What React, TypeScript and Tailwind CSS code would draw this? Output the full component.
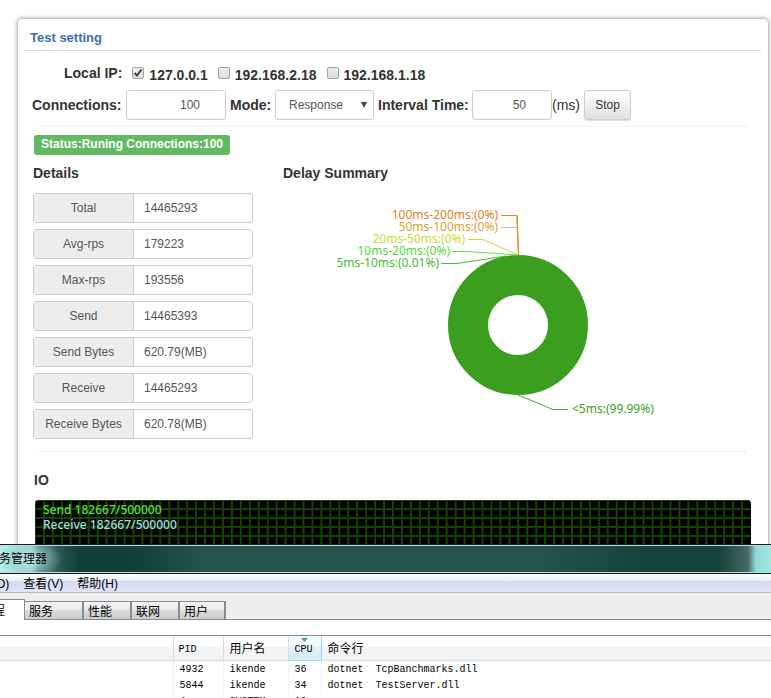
import React from "react";

const details = [
  ["Total", "14465293"],
  ["Avg-rps", "179223"],
  ["Max-rps", "193556"],
  ["Send", "14465393"],
  ["Send Bytes", "620.79(MB)"],
  ["Receive", "14465293"],
  ["Receive Bytes", "620.78(MB)"],
];

const addresses = ["127.0.0.1", "192.168.2.18", "192.168.1.18"];

const processes = [
  ["4932", "ikende", "36", "dotnet  TcpBanchmarks.dll"],
  ["5844", "ikende", "34", "dotnet  TestServer.dll"],
  ["4", "SYSTEM", "10", ""],
];

const tabs = [
  ["服务", "w-[59px]"],
  ["性能", "w-[48px]"],
  ["联网", "w-[48px]"],
  ["用户", "w-[46px]"],
];

const columns = Array.from({ length: 80 }, (_, i) => i * 8.95);
const rows = Array.from({ length: 12 }, (_, i) => i * 9);

function DelayChart() {
  return (
    <svg
      viewBox="0 0 470 240"
      className="block h-[240px] w-[470px] font-['Noto_Sans',sans-serif] text-[12px]"
      fill="none"
      role="img"
      aria-label="Delay Summary"
    >
      <circle cx="235" cy="135" r="50" stroke="#3b9e1f" strokeWidth="40" />
      <g strokeWidth="1">
        <path d="M218 25.500h16l1.500 40" stroke="#dc8a2c" />
        <path d="M218 37.500h16" stroke="#e8b36c" />
        <path d="M234 26l1.500 39" stroke="#dc7f20" />
        <path d="M185 49.500h15L235 65" stroke="#c3dc34" />
        <path d="M169 61.500h15L235 65" stroke="#5fdb48" />
        <path d="M158 73.500h16L223 66" stroke="#4fb83a" />
        <path d="M235 205l35 14.500h15" stroke="#48a52d" />
      </g>
      <g textAnchor="end">
        <text x="215" y="29" fill="#dd8023">100ms-200ms:(0%)</text>
        <text x="215" y="41" fill="#dba02b">50ms-100ms:(0%)</text>
        <text x="182" y="53" fill="#c5da35">20ms-50ms:(0%)</text>
        <text x="167" y="65" fill="#52d83a">10ms-20ms:(0%)</text>
        <text x="156" y="77" fill="#46b832">5ms-10ms:(0.01%)</text>
      </g>
      <text x="289" y="223" fill="#3b9e1f">&lt;5ms:(99.99%)</text>
    </svg>
  );
}

function IoGraph() {
  return (
    <div className="mx-[17px] grid h-[100px] overflow-hidden rounded bg-black">
      <svg viewBox="0 0 716 100" preserveAspectRatio="none" className="col-start-1 row-start-1 h-full w-full" stroke="#164206" strokeWidth="2">
        {columns.map((x) => (
          <line key={x} x1={x} x2={x} y1="0" y2="100" />
        ))}
        {rows.map((y) => (
          <line key={y} x1="0" x2="716" y1={y} y2={y} />
        ))}
      </svg>
      <div className="z-10 col-start-1 row-start-1 px-[8px] pt-[2px] font-['Noto_Sans',sans-serif] text-[12px] leading-[15px] font-medium">
        <p className="text-[#59e23d]">Send 182667/500000</p>
        <p className="text-[#a3dde4]">Receive 182667/500000</p>
      </div>
    </div>
  );
}

function TaskManager() {
  return (
    <section className="absolute inset-x-0 top-[544px] bottom-0 overflow-hidden bg-[#eee] font-['Liberation_Sans','Noto_Sans_CJK_SC',sans-serif] text-[12px] text-black">
      <header className="h-[30px] border-y border-[#14211f] bg-[radial-gradient(ellipse_32px_22px_at_30px_14px,#c3eeee_0,#9fcfcf99_50%,transparent),linear-gradient(90deg,#b6eeee_0,#93d8d6_32px,#3c716a_38px,#2c5c54_56px,#113f35_80px,#113f35_130px,#23534a_200px,#23534a_540px,#174238_650px,#174238_720px,#4b6b62_748px,#8cdcda_756px,#a4e5e3_771px)]">
        <h2 className="h-[28px] border-y border-[#b9dedb] text-[12px] leading-[26px]"><span className="-ml-px">务管理器</span></h2>
      </header>
      <nav className="flex h-[19px] items-center gap-[14px] border-b border-[#b4b9cf] bg-[linear-gradient(#fff,#e8ecf6_7px,#d4dbed_7px,#e1e5f5)] pt-[2px]">
        <button className="-ml-1">O)</button>
        <button>查看(V)</button>
        <button>帮助(H)</button>
      </nav>
      <div role="tablist" className="flex h-[27px] items-end border-b border-[#888a94] font-['Noto_Sans_CJK_SC',sans-serif]">
        <button role="tab" aria-selected="true" className="-mb-px h-[21px] w-[25px] border-t border-r border-[#888a94] bg-white text-left leading-[18px]"><span className="-ml-[7px]">程</span></button>
        {tabs.map(([name, width]) => (
          <button key={name} role="tab" aria-selected="false" className={width + " h-[18px] border-t border-r-2 border-[#888a94] bg-[linear-gradient(#f2f2f2,#ebebeb_50%,#dadada_50%,#cdcdcd)] pl-1 text-left leading-[17px]"}>{name}</button>
        ))}
      </div>
      <div className="h-[16px] border-b border-[#888a94] bg-white" />
      <table className="w-full table-fixed border-collapse bg-white font-['Liberation_Mono','Noto_Sans_CJK_SC',monospace] text-[10px]">
        <thead>
          <tr className="h-[24px] bg-[linear-gradient(#fff_40%,#f5f6f8_40%,#f1f2f4)] text-left leading-[16px]">
            <th className="w-[173px] border-r border-b border-[#d9dbdf]" />
            <th className="w-[50px] border-r border-b border-[#d9dbdf] pt-[4px] pl-[5px] font-normal">PID</th>
            <th className="w-[65px] border-r border-b border-[#d9dbdf] pt-[4px] pl-[6px] text-[12px] font-normal">用户名</th>
            <th className="w-[33px] border-x border-b border-[#96d9f9] bg-[linear-gradient(#f2f9fc_40%,#e1f1f9_40%,#d8ecf6)] pl-[6px] font-normal">
              <svg viewBox="0 0 7 4" className="ml-[6px] block h-[4px] w-[7px]" fill="#4a9cc0"><path d="M0 0h7L3.500 4z" /></svg>
              CPU
            </th>
            <th className="border-b border-[#d9dbdf] pt-[4px] pl-[6px] text-[12px] font-normal">命令行</th>
          </tr>
        </thead>
        <tbody>
          {processes.map(([pid, user, cpu, command]) => (
            <tr key={pid} className="h-[16px] leading-[14px]">
              <td className="border-r border-[#edf5fb]" />
              <td className="border-r border-[#edf5fb] pt-[2px] pl-[6px]">{pid}</td>
              <td className="border-r border-[#edf5fb] pt-[2px] pl-[6px]">{user}</td>
              <td className="border-r border-[#edf5fb] pt-[2px] pl-[6px]">{cpu}</td>
              <td className="pt-[2px] pl-[6px] whitespace-pre">{command}</td>
            </tr>
          ))}
        </tbody>
      </table>
    </section>
  );
}

export default function App() {
  return (
    <div className="relative h-screen overflow-hidden bg-white pt-[18px] pr-[2px] pl-[17px] font-['Liberation_Sans',Arial,sans-serif] text-[#333]">
      <main className="rounded-[5px] border border-[#c4c4c4] pb-[20px] shadow-[0_0_4px_#aaa]">
        <h1 className="mx-[7px] h-[32px] border-b border-[#d9d9d9] pl-[5px] text-[13px] leading-[37px] font-bold text-[#3d70b2]">Test setting</h1>
        <form className="text-[14px]" onSubmit={(e) => e.preventDefault()}>
          <fieldset className="flex h-[39px] items-center pt-[10px] pl-[46px] font-bold">
            <span className="mr-[10px] -mt-1">Local IP:</span>
            {addresses.map((ip, i) => (
              <label key={ip} className="mr-[10px] flex items-center gap-[5px]">
                <span className="-mt-1.5 grid size-[12px]">
                  <input
                    type="checkbox"
                    defaultChecked={i === 0}
                    className="peer col-start-1 row-start-1 size-[12px] appearance-none rounded-[2px] border border-[#a0a0a0] bg-linear-to-b from-[#eee] to-[#dcdcdc]"
                  />
                  <svg viewBox="0 0 12 12" className="pointer-events-none invisible z-10 col-start-1 row-start-1 size-[12px] peer-checked:visible" fill="none" stroke="#2f4444" strokeWidth="2">
                    <path d="M2.500 6l2.500 2.500L9.500 2.500" />
                  </svg>
                </span>
                <span>{ip}</span>
              </label>
            ))}
          </fieldset>
          <div className="flex h-[30px] items-center pl-[14px]">
            <label htmlFor="connections" className="w-[94px] font-bold">Connections:</label>
            <input id="connections" defaultValue="100" className="h-[30px] w-[100px] rounded-[3px] border border-[#ccc] pr-[25px] text-right text-[12px] text-[#555]" />
            <label htmlFor="mode" className="ml-[4px] w-[45px] font-bold">Mode:</label>
            <span className="grid h-[30px] w-[99px] items-center">
              <select id="mode" className="col-start-1 row-start-1 h-[30px] appearance-none rounded-[3px] border border-[#ccc] pl-[13px] text-[12px] text-[#555]">
                <option>Response</option>
              </select>
              <svg viewBox="0 0 6 6" className="pointer-events-none col-start-1 row-start-1 mr-[7px] size-[6px] justify-self-end" fill="#444">
                <path d="M0 0h6L3 6z" />
              </svg>
            </span>
            <label htmlFor="interval" className="ml-[4px] w-[94px] font-bold">Interval Time:</label>
            <input id="interval" defaultValue="50" className="h-[30px] w-[80px] rounded-[3px] border border-[#ccc] pr-[25px] text-right text-[12px] text-[#555]" />
            <span className="w-[32px]">(ms)</span>
            <button className="h-[30px] w-[47px] rounded-[3px] border border-[#ccc] bg-linear-to-b from-white to-[#e0e0e0] text-[12px] shadow-[0_1px_1px_#ddd]">Stop</button>
          </div>
        </form>
        <hr className="mx-[21px] mt-[6px] border-[#eee]" />
        <p className="mt-[8px] ml-[16px] h-[20px] w-[196px] rounded-[3px] bg-[#62b962] pl-[7px] text-[12px] leading-[18px] font-bold text-white">Status:Runing Connections:100</p>
        <div className="flex pl-[15px]">
          <section className="w-[250px]">
            <h2 className="pt-[8px] pb-[10px] text-[14px] leading-[20px] font-bold">Details</h2>
            <dl className="flex w-[220px] flex-col gap-[6px] text-[12px] text-[#555]">
              {details.map(([name, value]) => (
                <div key={name} className="flex h-[30px] rounded-[3px] border border-[#ccc] leading-[28px]">
                  <dt className="w-[100px] border-r border-[#ccc] bg-[#ededed] text-center">{name}</dt>
                  <dd className="pl-[10px]">{value}</dd>
                </div>
              ))}
            </dl>
          </section>
          <section>
            <h2 className="pt-[8px] text-[14px] leading-[20px] font-bold">Delay Summary</h2>
            <div className="pt-[7px]"><DelayChart /></div>
          </section>
        </div>
        <hr className="mx-[21px] mt-[12px] border-[#eee]" />
        <h2 className="mt-[18px] mb-[10px] ml-[16px] text-[14px] leading-[20px] font-bold">IO</h2>
        <IoGraph />
      </main>
      <TaskManager />
    </div>
  );
}
